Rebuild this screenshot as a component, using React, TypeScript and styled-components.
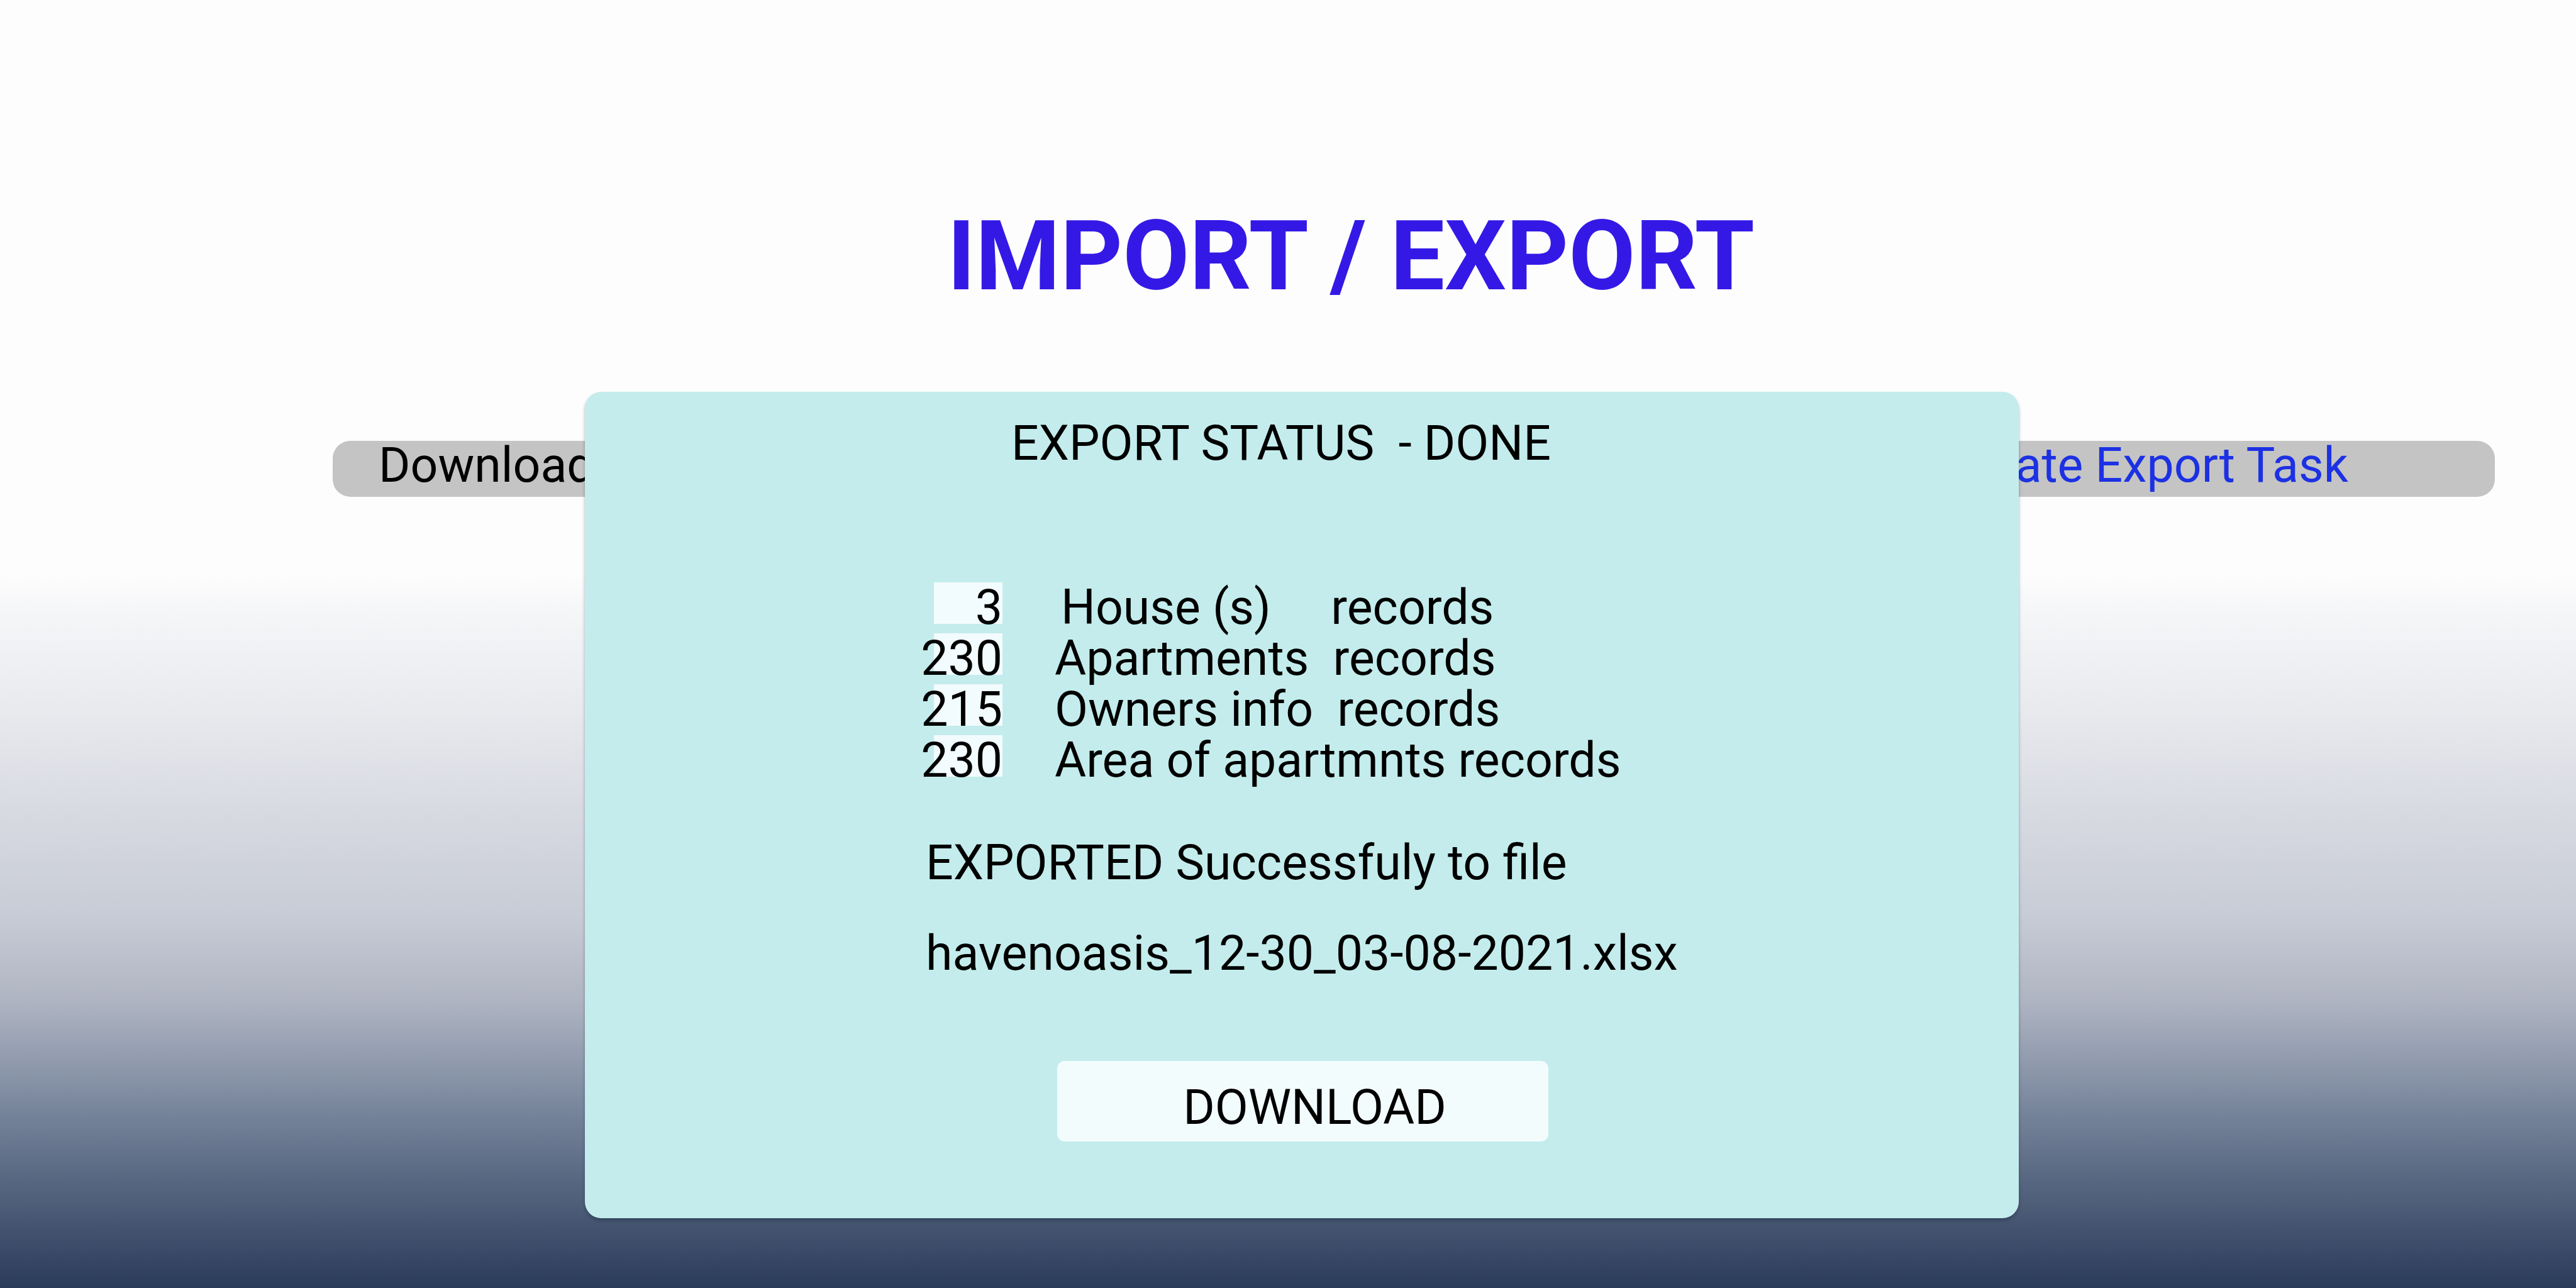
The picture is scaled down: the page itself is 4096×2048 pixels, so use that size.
import React from "react";
import styled, { createGlobalStyle } from "styled-components";

const Global = createGlobalStyle`
  html, body {
    margin: 0;
    padding: 0;
  }
  body {
    font-family: Roboto, "Noto Sans", "Liberation Sans", sans-serif;
    color: #000;
  }
`;

const Page = styled.div`
  position: relative;
  width: 4096px;
  height: 2048px;
  box-sizing: border-box;
  padding-top: 331px;
  overflow: hidden;
  background: linear-gradient(
    to bottom,
    #fdfdfd 0%,
    #fdfdfd 44.5%,
    #f5f6f8 47.5%,
    #e8eaee 55%,
    #d8dae2 63%,
    #c8ccd6 71%,
    #b0b5c3 77.5%,
    #939daf 82%,
    #75839a 86.5%,
    #56657f 92%,
    #2a3b5a 100%
  );
`;

const Header = styled.header`
  padding-left: 200px;
  text-align: center;
`;

const Title = styled.h1`
  margin: 0;
  font-family: Roboto, "Liberation Sans", sans-serif;
  font-weight: 700;
  font-size: 154px;
  line-height: 1;
  color: #3419e6;
`;

const ActionBar = styled.nav`
  margin-top: 216px;
  padding: 0 129px 0 529px;
  display: flex;
  justify-content: space-between;
`;

const ActionButton = styled.button<{ $accent?: boolean; $start?: boolean }>`
  width: 1112px;
  height: 89px;
  box-sizing: border-box;
  border: none;
  border-radius: 28px;
  background: #c4c4c4;
  display: flex;
  align-items: flex-start;
  justify-content: ${(p) => (p.$start ? "flex-start" : "center")};
  padding: 1px 0 0 ${(p) => (p.$start ? "73px" : "0")};
  font-family: Roboto, "Liberation Sans", sans-serif;
  font-size: 77px;
  line-height: 77px;
  color: ${(p) => (p.$accent ? "#1c31e3" : "#000")};
  white-space: nowrap;
`;

const Modal = styled.section`
  position: absolute;
  left: 930px;
  top: 623px;
  width: 2280px;
  height: 1314px;
  box-sizing: border-box;
  padding: 44px 0 0 542px;
  border-radius: 26px;
  background: #c4ecec;
  box-shadow: 0 4px 5px rgba(20, 40, 60, 0.35);
  display: flex;
  flex-direction: column;
  align-items: flex-start;
  font-family: Roboto, "Liberation Sans", sans-serif;
  font-size: 77px;
  color: #000;
`;

const ModalTitle = styled.h2`
  margin: 0 0 0 136px;
  font-weight: 400;
  font-size: 77px;
  line-height: 77px;
  white-space: pre;
`;

const Records = styled.div`
  margin-top: 182px;
  display: flex;
  flex-direction: column;
  gap: 15px;
`;

const RecordRow = styled.div`
  display: flex;
  align-items: flex-start;
`;

const Count = styled.div`
  margin-left: 13px;
  width: 109px;
  height: 66px;
  box-sizing: border-box;
  padding-top: 14px;
  line-height: 52px;
  background: #f2fbfd;
  display: flex;
  justify-content: flex-end;
  white-space: nowrap;
`;

const RecordLabel = styled.div<{ $shift?: number }>`
  margin-left: ${(p) => 83 + (p.$shift ?? 0)}px;
  padding-top: 14px;
  line-height: 52px;
  white-space: pre;
`;

const Message = styled.p<{ $gap: number }>`
  margin: ${(p) => p.$gap}px 0 0 0;
  line-height: 77px;
  white-space: pre;
`;

const DownloadButton = styled.button`
  margin: 132px 0 0 209px;
  width: 781px;
  height: 128px;
  box-sizing: border-box;
  padding: 36px 0 15px 38px;
  border: none;
  border-radius: 12px;
  background: #f3fcfd;
  font-family: Roboto, "Liberation Sans", sans-serif;
  font-size: 77px;
  line-height: 77px;
  color: #000;
  text-align: center;
`;

const records = [
  { count: "3", label: "House (s)     records", shift: 10 },
  { count: "230", label: "Apartments  records", shift: 0 },
  { count: "215", label: "Owners info  records", shift: 0 },
  { count: "230", label: "Area of apartmnts records", shift: 0 },
];

export default function App() {
  return (
    <>
      <Global />
      <Page>
        <Header>
          <Title>IMPORT / EXPORT</Title>
        </Header>
        <ActionBar>
          <ActionButton $start>Download Export File</ActionButton>
          <ActionButton $accent>Create Export Task</ActionButton>
        </ActionBar>
        <Modal>
          <ModalTitle>{"EXPORT STATUS  - DONE"}</ModalTitle>
          <Records>
            {records.map((r, i) => (
              <RecordRow key={i}>
                <Count>{r.count}</Count>
                <RecordLabel $shift={r.shift}>{r.label}</RecordLabel>
              </RecordRow>
            ))}
          </Records>
          <Message $gap={99}>EXPORTED Successfuly to file</Message>
          <Message $gap={67}>havenoasis_12-30_03-08-2021.xlsx</Message>
          <DownloadButton>DOWNLOAD</DownloadButton>
        </Modal>
      </Page>
    </>
  );
}
